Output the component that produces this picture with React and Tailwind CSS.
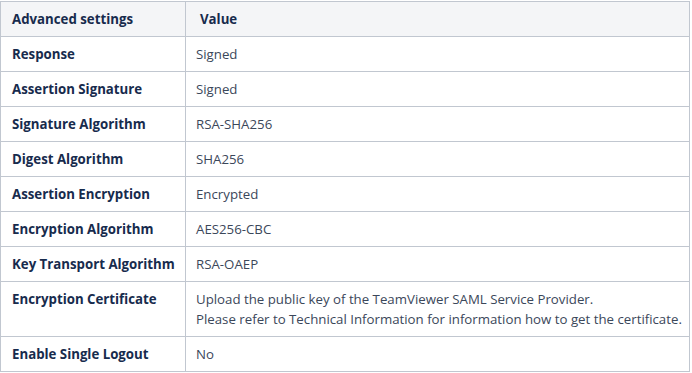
import React from 'react';

const rows = [
  ['Response', ['Signed']],
  ['Assertion Signature', ['Signed']],
  ['Signature Algorithm', ['RSA-SHA256']],
  ['Digest Algorithm', ['SHA256']],
  ['Assertion Encryption', ['Encrypted']],
  ['Encryption Algorithm', ['AES256-CBC']],
  ['Key Transport Algorithm', ['RSA-OAEP']],
  [
    'Encryption Certificate',
    [
      'Upload the public key of the TeamViewer SAML Service Provider.',
      'Please refer to Technical Information for information how to get the certificate.',
    ],
  ],
  ['Enable Single Logout', ['No']],
];

export default function App() {
  return (
    <div className="bg-white w-[692px] h-[373px] pt-px" style={{ fontFamily: '"Open Sans", "Noto Sans", sans-serif' }}>
      <table className="border-collapse table-fixed w-[690px] text-[13.25px] leading-[20px] text-[#172b4d]">
        <thead>
          <tr className="bg-[#f4f5f7]">
            <th className="w-[185px] border border-[#c1c7d0] text-left font-bold pl-[11px] pr-1 py-[7px] align-top">
              Advanced settings
            </th>
            <th className="border border-[#c1c7d0] text-left font-bold pl-[14px] pr-1 py-[7px] align-top">
              Value
            </th>
          </tr>
        </thead>
        <tbody>
          {rows.map(([label, lines]) => (
            <tr key={label}>
              <td className="border border-[#c1c7d0] font-bold pl-[11px] pr-1 py-[7px] align-top whitespace-nowrap">
                {label}
              </td>
              <td className="border border-[#c1c7d0] pl-[10px] pr-1 py-[7px] align-top whitespace-nowrap text-[#3b475a]">
                {lines.map((l) => (
                  <div key={l}>{l}</div>
                ))}
              </td>
            </tr>
          ))}
        </tbody>
      </table>
    </div>
  );
}
